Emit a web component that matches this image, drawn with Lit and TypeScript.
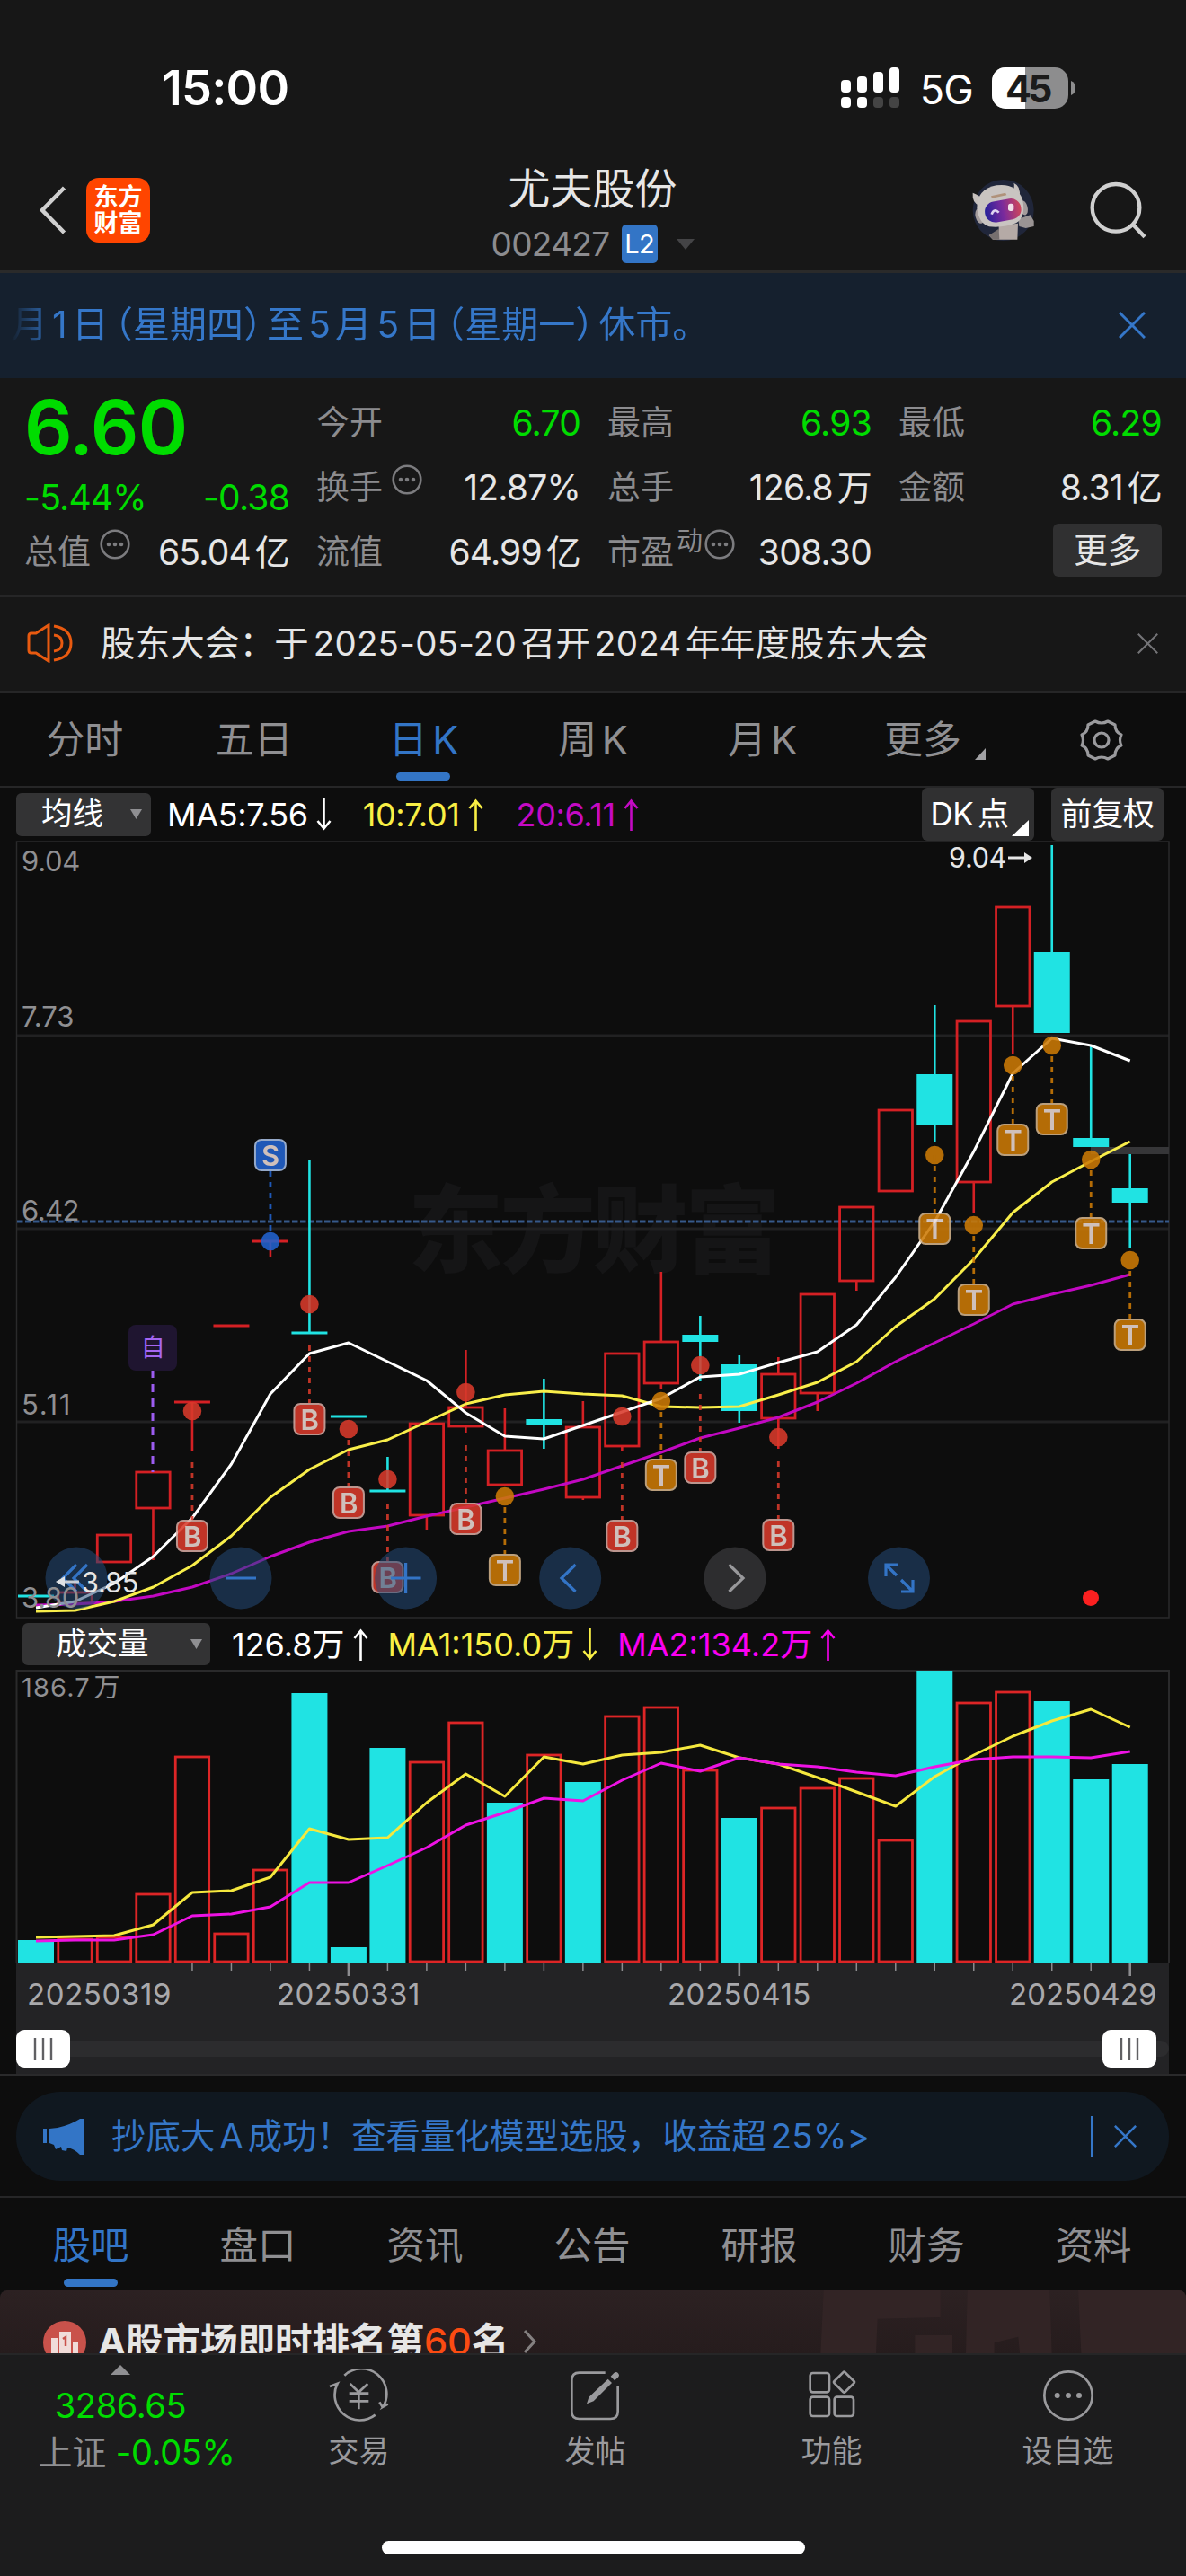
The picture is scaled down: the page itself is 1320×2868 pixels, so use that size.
import { LitElement, html, svg, css, nothing } from 'lit';
import { customElement } from 'lit/decorators.js';
import { classMap } from 'lit/directives/class-map.js';

type Candle = { up: boolean; top: number; bottom: number; high?: number; low?: number };
type Marker = { i: number; kind: 'B' | 'S' | 'T'; dot: number; badge: number };

const FIRST_X = 40;
const STEP = 43.49;
const BODY = 40;

const xAt = (i: number) => FIRST_X + STEP * i;

const c = (up: boolean, top: number, bottom: number, high?: number, low?: number): Candle => ({ up, top, bottom, high, low });

const candles: Candle[] = [
  c(false, 1777, 1777),
  c(true, 1773, 1785, 1762),
  c(true, 1709, 1739),
  c(true, 1639, 1679, undefined, 1737),
  c(true, 1561, 1561, undefined, 1615),
  c(true, 1476, 1476),
  c(true, 1382, 1382, undefined, 1399),
  c(false, 1484, 1484, 1292),
  c(false, 1577, 1577),
  c(false, 1660, 1660, 1622),
  c(true, 1585, 1687, undefined, 1703),
  c(true, 1567, 1588, 1503, 1595),
  c(true, 1615, 1653, 1568),
  c(false, 1580, 1587, 1535, 1613),
  c(true, 1589, 1667, 1560, 1670),
  c(true, 1507, 1610, undefined, 1615),
  c(true, 1494, 1540, 1416, 1546),
  c(false, 1486, 1494, 1465, 1538),
  c(false, 1519, 1571, 1509, 1584),
  c(true, 1530, 1579, 1511, 1613),
  c(true, 1441, 1551, undefined, 1571),
  c(true, 1344, 1426, undefined, 1437),
  c(true, 1236, 1326),
  c(false, 1196, 1253, 1119, 1272),
  c(true, 1137, 1316, undefined, 1350),
  c(true, 1010, 1120, undefined, 1173),
  c(false, 1060, 1150, 941),
  c(false, 1267, 1277, 1164),
  c(false, 1323, 1339, 1285, 1390),
];

const ma5 = [1790, 1783, 1763, 1733, 1690, 1630, 1552, 1507, 1495, 1516, 1537, 1573, 1599, 1602, 1587, 1572, 1557, 1533, 1530, 1517, 1505, 1475, 1422, 1360, 1282, 1195, 1156, 1164, 1181];
const ma10 = [1794, 1793, 1783, 1767, 1743, 1710, 1667, 1636, 1614, 1603, 1583, 1563, 1553, 1549, 1552, 1554, 1566, 1567, 1566, 1553, 1539, 1516, 1477, 1446, 1402, 1350, 1316, 1293, 1271];
const ma20 = [1787, 1786, 1783, 1777, 1767, 1752, 1733, 1717, 1705, 1699, 1688, 1678, 1668, 1658, 1647, 1632, 1617, 1601, 1590, 1578, 1561, 1540, 1516, 1495, 1474, 1452, 1441, 1431, 1419];

const markers: Marker[] = [
  { i: 4, kind: 'B', dot: 1571, badge: 1710 },
  { i: 6, kind: 'S', dot: 1382, badge: 1286 },
  { i: 7, kind: 'B', dot: 1452, badge: 1580 },
  { i: 8, kind: 'B', dot: 1591, badge: 1673 },
  { i: 9, kind: 'B', dot: 1647, badge: 1756 },
  { i: 11, kind: 'B', dot: 1550, badge: 1691 },
  { i: 12, kind: 'T', dot: 1666, badge: 1748 },
  { i: 15, kind: 'B', dot: 1577, badge: 1710 },
  { i: 16, kind: 'T', dot: 1560, badge: 1642 },
  { i: 17, kind: 'B', dot: 1520, badge: 1634 },
  { i: 19, kind: 'B', dot: 1600, badge: 1709 },
  { i: 23, kind: 'T', dot: 1286, badge: 1368 },
  { i: 24, kind: 'T', dot: 1364, badge: 1447 },
  { i: 25, kind: 'T', dot: 1186, badge: 1269 },
  { i: 26, kind: 'T', dot: 1164, badge: 1246 },
  { i: 27, kind: 'T', dot: 1291, badge: 1373 },
  { i: 28, kind: 'T', dot: 1403, badge: 1486 },
];

const volumeTops = [2160, 2159, 2157, 2109, 1956, 2153, 2082, 1885, 2168, 1946, 1962, 1918, 2007, 1954, 1984, 1911, 1901, 1971, 2024, 2013, 1991, 1980, 2049, 1860, 1896, 1884, 1894, 1981, 1964];
const volumeDown = [0, 7, 8, 9, 12, 14, 18, 23, 26, 27, 28];
const volumeMa1 = [2157, 2156, 2155, 2143, 2107, 2105, 2090, 2036, 2048, 2046, 2007, 1975, 2000, 1956, 1964, 1954, 1951, 1943, 1957, 1964, 1979, 1995, 2011, 1978, 1954, 1933, 1916, 1903, 1923];
const volumeMa2 = [2161, 2160, 2160, 2154, 2133, 2131, 2123, 2096, 2096, 2077, 2057, 2032, 2018, 2002, 2005, 1982, 1963, 1972, 1957, 1964, 1967, 1973, 1977, 1967, 1959, 1956, 1956, 1957, 1950];

const points = (ys: number[]) => ys.map((y, i) => `${xAt(i).toFixed(1)},${y}`).join(' ');

const arrow = (up: boolean) => html`
  <svg class="arrow" width="17" height="36" viewBox="0 0 17 36" fill="none" stroke="currentColor" stroke-width="2.6">
    ${up ? svg`<path d="M8.5 36V2M1.5 11L8.5 2.500L15.500 11" />` : svg`<path d="M8.5 0V34M1.5 25L8.5 33.5L15.500 25" />`}
  </svg>`;

const cross = (size: number, width: number) => html`
  <svg width=${size} height=${size} viewBox="0 0 30 30" fill="none" stroke="currentColor" stroke-width=${width}>
    <path d="M1 1L29 29M29 1L1 29" />
  </svg>`;

const info = html`
  <svg class="info" width="34" height="34" viewBox="0 0 34 34" fill="currentColor">
    <circle cx="17" cy="17" r="15.300" fill="none" stroke="currentColor" stroke-width="2.600" />
    <circle cx="10" cy="17" r="2.300" /><circle cx="17" cy="17" r="2.300" /><circle cx="24" cy="17" r="2.300" />
  </svg>`;

@customElement('price-chart')
class PriceChart extends LitElement {
  static styles = css`
    :host {
      display: block;
      height: 866px;
    }

    svg {
      display: block;
      font-family: Inter, "Noto Sans CJK SC", sans-serif;
    }

    .frame {
      fill: none;
      stroke: #2a2a2b;
      stroke-width: 1.5;
    }

    .grid {
      stroke: #212122;
      stroke-width: 3;
    }

    .axis {
      fill: #8f8f92;
      font-size: 31px;
    }

    .extreme {
      fill: #e6e6e6;
      font-size: 30.500px;
    }

    .watermark {
      fill: #151516;
      font-size: 106px;
      font-weight: 900;
    }

    .line {
      fill: none;
      stroke-width: 3;
      stroke-linejoin: round;
    }

    .letter {
      font-size: 31px;
      font-weight: 600;
      fill: #ead9d3;
      text-anchor: middle;
    }
  `;

  candle(d: Candle, i: number) {
    const x = xAt(i);
    const color = d.up ? '#d42024' : '#20e3e3';
    const flat = d.bottom - d.top < 2;
    return svg`
      ${d.high ? svg`<path d="M${x} ${d.high}V${d.top}" stroke=${color} stroke-width="2.600" />` : nothing}
      ${d.low ? svg`<path d="M${x} ${d.bottom}V${d.low}" stroke=${color} stroke-width="2.600" />` : nothing}
      ${flat
        ? svg`<path d="M${x - BODY / 2} ${d.top}h${BODY}" stroke=${color} stroke-width="3" />`
        : d.up
          ? svg`<rect x=${x - BODY / 2 + 1.3} y=${d.top} width=${BODY - 2.6} height=${d.bottom - d.top} fill="none" stroke=${color} stroke-width="2.800" />`
          : svg`<rect x=${x - BODY / 2} y=${d.top} width=${BODY} height=${d.bottom - d.top} fill=${color} />`}
    `;
  }

  marker(m: Marker) {
    const x = xAt(m.i);
    const color = { B: '#d93a2b', S: '#2263cf', T: '#cc7a06' }[m.kind];
    const edge = { B: '#d5a9a2', S: '#a8bfe4', T: '#d3b48c' }[m.kind];
    // buy labels hang below the candle, so their leader starts under the wick
    const from = m.kind === 'B' ? m.badge - 82 : m.dot;
    const start = m.kind === 'S' ? m.badge + 18 : Math.max(from, m.dot);
    const end = m.kind === 'S' ? m.dot : m.badge - 18;
    return svg`
      <g opacity="0.880">
        <circle cx=${x} cy=${m.dot} r="10.300" fill=${color} />
        <path d="M${x} ${start}V${end}" stroke=${color} stroke-width="2.800" stroke-dasharray="6 6" />
        <rect x=${x - 17} y=${m.badge - 17} width="34" height="34" rx="7" fill=${color} stroke=${edge} stroke-width="2" />
        <text class="letter" x=${x} y=${m.badge + 11.5}>${m.kind}</text>
      </g>`;
  }

  render() {
    return html`
      <svg width="1320" height="866" viewBox="0 936 1320 866">
        <text class="watermark" x="454" y="1408" textLength="414">东方财富</text>
        <path class="grid" d="M19 1153H1301M19 1368H1301M19 1583H1301" />
        <rect class="frame" x="18.500" y="937" width="1282.500" height="864" />
        <path d="M1214 1281H1301" stroke="#363638" stroke-width="8" />
        <path d="M19 1360H1301" stroke="#36598a" stroke-width="3" stroke-dasharray="6.500 2.500" />

        <text class="axis" x="24" y="970" textLength="65">9.04</text>
        <text class="axis" x="24" y="1143" textLength="58">7.73</text>
        <text class="axis" x="24" y="1359" textLength="64">6.42</text>
        <text class="axis" x="24" y="1575" textLength="54">5.11</text>

        ${candles.map((d, i) => this.candle(d, i))}

        <text class="extreme" x="1056" y="966" textLength="64">9.04</text>
        <path d="M1122 955H1143" stroke="#e6e6e6" stroke-width="3" />
        <path d="M1140 949L1149 955L1140 961Z" fill="#e6e6e6" />

        <polyline class="line" stroke="#c208c2" points=${points(ma20)} />
        <polyline class="line" stroke="#f8ee4a" points=${points(ma10)} />
        <polyline class="line" stroke="#ffffff" points=${points(ma5)} />
        ${markers.map((m) => this.marker(m))}

        <path d="M170 1525V1639" stroke="#9c5cf0" stroke-width="3" stroke-dasharray="9 7" />
        <rect x="143" y="1475" width="54" height="51" rx="8" fill="#1f1530" />
        <text x="170" y="1510" font-size="27" fill="#a566f2" text-anchor="middle">自</text>

        ${[85, 268, 451.6, 634.7, 1000.5].map((x) => svg`<circle cx=${x} cy="1757" r="34.500" fill="#244a78" opacity="0.550" />`)}
        <circle cx="818" cy="1757" r="34.500" fill="#2d2d2f" />
        <g fill="none" stroke="#3374c6" stroke-width="3.200">
          <path d="M85 1742L70 1757L85 1772M97 1742L82 1757L97 1772" />
          <path d="M251.500 1757H285" />
          <path d="M435 1757H468.500M451.600 1740V1774" />
          <path d="M640.500 1742L625 1757L640.500 1772" />
          <path d="M986 1755V1742H999M986 1742L998 1754M1003 1772H1016V1759M1016 1772L1003 1759" />
          <path stroke="#98989b" d="M811.500 1742L827 1757L811.500 1772" />
        </g>

        <text class="axis" x="24" y="1790" textLength="64">3.80</text>
        <text class="extreme" x="91" y="1773" textLength="63">3.85</text>
        <path d="M70 1761H88" stroke="#c9ced6" stroke-width="3" />
        <path d="M72 1755L62 1761L72 1767Z" fill="#dfe2e6" />
        <circle cx="1214" cy="1779" r="9" fill="#fb2020" />
      </svg>
    `;
  }
}

@customElement('volume-chart')
class VolumeChart extends LitElement {
  static styles = css`
    :host {
      display: block;
      height: 452px;
    }

    svg {
      display: block;
      font-family: Inter, "Noto Sans CJK SC", sans-serif;
    }

    .frame {
      fill: none;
      stroke: #2a2a2b;
      stroke-width: 2;
    }

    .max {
      fill: #8f8f92;
      font-size: 29px;
    }

    .date {
      fill: #a9a9ac;
      font-size: 33px;
    }

    .line {
      fill: none;
      stroke-width: 3;
      stroke-linejoin: round;
    }
  `;

  bar(top: number, i: number) {
    const x = xAt(i);
    return volumeDown.includes(i)
      ? svg`<rect x=${x - BODY / 2} y=${top} width=${BODY} height=${2185 - top} fill="#20e3e3" />`
      : svg`<rect x=${x - BODY / 2 + 1.3} y=${top} width=${BODY - 2.6} height=${2184 - top} fill="none" stroke="#dd2526" stroke-width="2.800" />`;
  }

  tick(i: number) {
    const major = i % 10 === 8;
    return svg`<path d="M${xAt(i)} 2185v${major ? 15 : 9}" stroke="#8c8c8f" stroke-width=${major ? 2.6 : 1.5} />`;
  }

  handle(x: number) {
    return svg`
      <rect x=${x} y="2260" width="60" height="42" rx="9" fill="#fff" />
      <path d="M${x + 21} 2269v24M${x + 30} 2269v24M${x + 39} 2269v24" stroke="#606063" stroke-width="2.400" />`;
  }

  render() {
    return html`
      <svg width="1320" height="452" viewBox="0 1859 1320 452">
        <path class="frame" d="M18.500 2185V1860H1301V2185" />
        <rect x="18" y="2185" width="1283" height="125" fill="#232325" />
        <text class="max" x="24" y="1889" textLength="109">186.7万</text>
        ${volumeTops.map((top, i) => this.bar(top, i))}
        <polyline class="line" stroke="#f5e83e" points=${points(volumeMa1)} />
        <polyline class="line" stroke="#ee12e4" points=${points(volumeMa2)} />
        ${volumeTops.map((_, i) => (i > 3 ? this.tick(i) : nothing))}
        <text class="date" x="30" y="2232" textLength="160">20250319</text>
        <text class="date" x="308" y="2232" textLength="159">20250331</text>
        <text class="date" x="743" y="2232" textLength="159">20250415</text>
        <text class="date" x="1123" y="2232" textLength="164">20250429</text>
        <rect x="18" y="2272" width="1283" height="18" rx="9" fill="#2c2c2e" />
        ${this.handle(18)} ${this.handle(1227)}
        <path d="M0 2310H1320" stroke="#2a2a2b" stroke-width="2" />
      </svg>
    `;
  }
}

@customElement('app-root')
class AppRoot extends LitElement {
  static styles = css`
    :host {
      display: block;
      width: 1320px;
      height: 2868px;
      overflow: hidden;
      background: #0d0d0d;
      color: #e6e6e6;
      font-family: Inter, "Noto Sans CJK SC", sans-serif;
      font-size: 38px;
      line-height: 1;
      letter-spacing: -0.01em;
      text-autospace: normal;
      white-space: nowrap;
    }

    * {
      box-sizing: border-box;
    }

    svg {
      display: block;
      flex: none;
    }

    .status {
      display: flex;
      align-items: center;
      height: 166px;
      padding: 30px 122px 0 180px;
      background: #171717;
      color: #fff;
    }

    .time {
      flex: 1;
      font-size: 54px;
      font-weight: 600;
      letter-spacing: -0.015em;
    }

    .network {
      margin: 3px 21px 0 22px;
      font-size: 45px;
      letter-spacing: -0.02em;
    }

    .battery text {
      font: 700 43px Inter, sans-serif;
      fill: #1b1b1b;
    }

    .header {
      display: grid;
      grid-template-columns: 1fr auto 1fr;
      align-items: center;
      height: 138px;
      padding: 0 44px 0 43px;
      background: #171717;
      border-bottom: 3px solid #2a2a2a;
    }

    .header-left {
      display: flex;
      align-items: center;
      gap: 22px;
    }

    .logo {
      display: grid;
      align-content: center;
      justify-content: center;
      width: 71px;
      height: 72px;
      border-radius: 14px;
      background: #ff4500;
      color: #fff;
      font-size: 27px;
      font-weight: 700;
      line-height: 29px;
      letter-spacing: 0;
    }

    .title {
      display: flex;
      flex-direction: column;
      align-items: center;
      gap: 17px;
      padding-top: 12px;
    }

    .name {
      font-size: 47px;
      letter-spacing: 0;
    }

    .code {
      display: flex;
      align-items: center;
      color: #8c8c8f;
      font-size: 37px;
      letter-spacing: -0.018em;
    }

    .level {
      width: 40px;
      height: 43px;
      margin: 0 21px 0 13px;
      border-radius: 5px;
      background: #3375c6;
      color: #fff;
      font-size: 29px;
      line-height: 43px;
      text-align: center;
    }

    .header-right {
      display: flex;
      align-items: center;
      justify-content: flex-end;
      gap: 58px;
    }

    .notice {
      display: flex;
      align-items: center;
      justify-content: space-between;
      height: 117px;
      padding: 0 45px 2px 12px;
      background: #15202e;
      color: #3577c9;
      font-size: 41px;
      letter-spacing: 0;
    }

    .fade {
      mask-image: linear-gradient(90deg, transparent 0, #000 50px);
    }

    .open {
      margin-left: -14px;
    }

    .close {
      margin-right: -15px;
    }

    .quote {
      display: grid;
      grid-template: repeat(3, 72px) / 295px 294px 294px 293px;
      column-gap: 30px;
      height: 244px;
      padding: 13px 27px 0 27px;
      background: #171717;
      border-bottom: 2px solid #262627;
    }

    .last {
      grid-row: span 2;
      display: flex;
      flex-direction: column;
      color: #00dc00;
    }

    .price {
      height: 83px;
      font-size: 84px;
      font-weight: 600;
      line-height: 83px;
      letter-spacing: -0.01em;
    }

    .change {
      display: flex;
      justify-content: space-between;
      padding-top: 17px;
    }

    .change,
    .value {
      font-size: 39px;
      letter-spacing: -0.02em;
    }

    .cell {
      display: flex;
      align-items: center;
    }

    .cell:last-child {
      justify-content: flex-end;
    }

    .label {
      color: #8c8c8f;
      font-size: 37px;
      letter-spacing: 0;
    }

    .sup {
      margin: -24px 0 0 3px;
      color: #8c8c8f;
      font-size: 29px;
    }

    .info {
      margin: -16px 0 0 10px;
      color: #7c7c7f;
    }

    .sup + .info {
      margin-left: 2px;
    }

    .value {
      margin-left: auto;
    }

    .green {
      color: #00dc00;
    }

    .more {
      width: 121px;
      height: 59px;
      margin-top: -4px;
      border-radius: 6px;
      background: #303031;
      line-height: 59px;
      text-align: center;
    }

    .news {
      display: flex;
      align-items: center;
      height: 107px;
      padding: 0 31px 2px 30px;
      background: #171717;
      border-bottom: 3px solid #262627;
      font-size: 38.4px;
      letter-spacing: 0.007em;
    }

    .news-text {
      flex: 1;
      margin-left: 31px;
    }

    .dim {
      color: #747477;
    }

    .tabs {
      display: grid;
      grid-template-columns: repeat(7, 1fr);
      height: 105px;
      border-bottom: 2px solid #262627;
      color: #8f8f92;
      font-size: 43px;
      letter-spacing: 0;
    }

    .tab {
      display: flex;
      flex-direction: column;
      align-items: center;
      justify-content: center;
      position: relative;
    }

    .active {
      color: #3375c6;
    }

    .active::after {
      content: "";
      position: absolute;
      bottom: 6px;
      width: 60px;
      height: 9px;
      border-radius: 5px;
      background: #3375c6;
    }

    .with-corner {
      flex-direction: row;
      padding-left: 7px;
    }

    .corner {
      margin: 31px 0 0 15px;
    }

    .indicators {
      display: flex;
      align-items: center;
      height: 59px;
      padding: 0 25px 0 18px;
      font-size: 36px;
      letter-spacing: -0.01em;
      text-autospace: no-autospace;
    }

    .select {
      display: flex;
      align-items: center;
      justify-content: space-between;
      width: 150px;
      height: 48px;
      padding: 0 10px 0 28px;
      border-radius: 6px;
      background: #333334;
      color: #fff;
      font-size: 34.5px;
      letter-spacing: 0;
    }

    .reading {
      display: flex;
      align-items: center;
    }

    .arrow {
      margin-left: 9px;
    }

    .white {
      color: #fff;
    }

    .yellow {
      color: #f9ef45;
    }

    .purple {
      color: #c40ac4;
    }

    .magenta {
      color: #fa00f0;
    }

    .chip {
      display: flex;
      justify-content: center;
      align-items: center;
      width: 125px;
      height: 59px;
      border-radius: 6px;
      background: #303031;
      color: #fff;
      font-size: 35px;
      letter-spacing: -0.01em;
    }

    .chip + .chip {
      margin-left: 19px;
    }

    .dk {
      margin-left: auto;
      gap: 3px;
      text-autospace: normal;
    }

    .dk svg {
      align-self: flex-end;
      margin: 0 -3px 5px 0;
    }

    .volume-head {
      height: 57px;
      padding-left: 25px;
      letter-spacing: 0;
    }

    .volume-head .select {
      width: 209px;
      height: 47px;
      padding: 0 9px 0 37px;
    }

    .promo-wrap {
      height: 136px;
      padding: 18px 19px 0 18px;
      border-bottom: 2px solid #262627;
    }

    .promo {
      display: flex;
      align-items: center;
      height: 99px;
      padding: 0 36px 0 30px;
      border-radius: 49px;
      background: #101820;
      color: #3577c9;
      font-size: 38.4px;
      letter-spacing: 0.1px;
    }

    .promo-text {
      flex: 1;
      margin-left: 31px;
    }

    .bar {
      width: 2px;
      height: 45px;
      margin-right: 24px;
      background: #3577c9;
    }

    .sections {
      height: 103px;
      padding: 0 10px 0 8px;
      border: 0;
      font-size: 42.500px;
    }

    .sections .active::after {
      bottom: 4px;
    }

    .sections .tab {
      padding-top: 4px;
    }

    .rank {
      display: flex;
      align-items: flex-start;
      position: relative;
      height: 70px;
      overflow: hidden;
      padding: 34px 0 0 48px;
      background: linear-gradient(#2c2122, #261c1d);
      border-radius: 8px 8px 0 0;
      font-size: 41.5px;
      font-weight: 700;
      letter-spacing: 0;
      text-autospace: no-autospace;
    }

    .rank-text {
      margin: 3px 17px 0 13px;
    }

    .hot {
      color: #fb4b12;
      font-weight: 500;
    }

    .more-arrow {
      margin-top: 10px;
    }

    .rank-art {
      position: absolute;
      top: 0;
      right: 0;
    }

    .bottom {
      display: grid;
      grid-template-columns: 268px repeat(4, 263px);
      position: relative;
      height: 248px;
      background: #1c1c1d;
      border-top: 2px solid #262627;
      color: #9a9a9d;
    }

    .index {
      display: flex;
      flex-direction: column;
      align-items: center;
      padding-top: 11px;
      color: #8f8f92;
    }

    .index .green {
      letter-spacing: -0.01em;
    }

    .points {
      margin-top: 15px;
    }

    .shanghai {
      display: flex;
      gap: 11px;
      margin: 14px 0 0 36px;
    }

    .action {
      display: flex;
      flex-direction: column;
      align-items: center;
      padding-top: 15px;
      font-size: 34px;
      letter-spacing: 0;
    }

    .action svg {
      height: 60px;
      margin-bottom: 15px;
    }

    .home {
      position: absolute;
      left: 425px;
      bottom: 24px;
      width: 471px;
      height: 15px;
      border-radius: 8px;
      background: #fff;
    }
  `;

  statusBar() {
    return html`
      <div class="status">
        <div class="time">15:00</div>
        <svg width="66" height="46" viewBox="0 0 66 46" fill="#fff">
          <rect x="0" y="14" width="11" height="14" rx="4" />
          <rect x="18" y="10" width="11" height="18" rx="4" />
          <rect x="36" y="5" width="11" height="23" rx="4" />
          <rect x="54" y="0" width="11" height="28" rx="4" />
          <rect x="0" y="33" width="11" height="12" rx="4" />
          <rect x="18" y="33" width="11" height="12" rx="4" />
          <rect x="36" y="33" width="11" height="12" rx="4" fill="#444" />
          <rect x="54" y="33" width="11" height="12" rx="4" fill="#444" />
        </svg>
        <div class="network">5G</div>
        <svg class="battery" width="94" height="46" viewBox="0 0 94 46">
          <rect width="85" height="46" rx="15" fill="#8d8d8e" />
          <path d="M37 0H15A15 15 0 0 0 0 15V31A15 15 0 0 0 15 46H37Z" fill="#fff" />
          <path d="M88 15Q93 17 93 23T88 31Z" fill="#8d8d8e" />
          <text x="15" y="38.500" textLength="52">45</text>
        </svg>
      </div>
    `;
  }

  header() {
    return html`
      <div class="header">
        <div class="header-left">
          <svg width="31" height="54" viewBox="0 0 31 54" fill="none" stroke="#cfcfcf" stroke-width="4.500">
            <path d="M28.500 2L4 27L28.500 52" />
          </svg>
          <div class="logo"><span>东方</span><span>财富</span></div>
        </div>
        <div class="title">
          <div class="name">尤夫股份</div>
          <div class="code">
            002427<span class="level">L2</span>
            <svg width="20" height="12" viewBox="0 0 20 12" fill="#444446"><path d="M0 0H20L10 12Z" /></svg>
          </div>
        </div>
        <div class="header-right">
          <svg width="74" height="72" viewBox="55 30 222 216">
            <defs>
              <linearGradient id="visor" x1="0" x2="1">
                <stop offset="0" stop-color="#25209a" />
                <stop offset="0.500" stop-color="#7a2a9c" />
                <stop offset="1" stop-color="#d0475a" />
              </linearGradient>
            </defs>
            <circle cx="165" cy="138" r="102" fill="#20263a" />
            <path d="M150 190L214 182L212 236H130L117 222L150 205Z" fill="#b5aaa6" />
            <path d="M117 222L150 200L152 236H130Z" fill="#77706f" />
            <path d="M215 168L255 154L267 174V192L240 198L218 192Z" fill="#9a9494" />
            <path d="M84 122Q60 112 63 80Q75 84 86 92ZM192 74Q206 64 200 47Q224 58 219 92Z" fill="#c6c0bd" />
            <ellipse cx="86" cy="158" rx="14" ry="25" fill="#a49c9c" transform="rotate(-14 86 158)" />
            <ellipse cx="233" cy="130" rx="13" ry="25" fill="#a49c9c" transform="rotate(-14 233 130)" />
            <path d="M77 132Q76 68 142 55Q207 46 229 101Q242 160 208 181Q165 198 118 193Q84 183 77 132Z" fill="#c9c4c1" />
            <path d="M124 91L172 80L176 88L127 98Z" fill="#b0927a" />
            <rect x="103" y="104" width="122" height="70" rx="34" fill="url(#visor)" transform="rotate(-10 164 139)" />
            <path d="M126 152Q134 130 150 146" fill="none" stroke="#ded4f0" stroke-width="8" />
            <rect x="181" y="116" width="19" height="25" rx="8" fill="#f0dfe8" />
          </svg>
          <svg width="64" height="66" viewBox="452 34 192 198" fill="none" stroke="#d0d0d0" stroke-width="13">
            <circle cx="542" cy="125" r="79" /><path d="M598 180L638 222" />
          </svg>
        </div>
      </div>
    `;
  }

  cell(label: string, value: string, extra: unknown = nothing, green = false) {
    return html`
      <div class="cell">
        <span class="label">${label}</span>${extra}
        <span class=${classMap({ value: true, green })}>${value}</span>
      </div>
    `;
  }

  quote() {
    return html`
      <div class="quote">
        <div class="last">
          <div class="price">6.60</div>
          <div class="change"><span>-5.44%</span><span>-0.38</span></div>
        </div>
        ${this.cell('今开', '6.70', nothing, true)}
        ${this.cell('最高', '6.93', nothing, true)}
        ${this.cell('最低', '6.29', nothing, true)}
        ${this.cell('换手', '12.87%', info)}
        ${this.cell('总手', '126.8万')}
        ${this.cell('金额', '8.31亿')}
        ${this.cell('总值', '65.04亿', info)}
        ${this.cell('流值', '64.99亿')}
        ${this.cell('市盈', '308.30', html`<span class="sup">动</span>${info}`)}
        <div class="cell"><div class="more">更多</div></div>
      </div>
      <div class="news">
        <svg width="51" height="44" viewBox="0 0 51 44" fill="none" stroke="#e85a10" stroke-width="3">
          <path d="M24 2V42L10 33H5Q2 33 2 30V14Q2 11 5 11H10Z" />
          <path d="M30 13Q39 14 39 22T30 31M30 3Q49 6 49 22T30 41" />
        </svg>
        <div class="news-text">股东大会：于2025-05-20召开2024年年度股东大会</div>
        <span class="dim">${cross(23, 2.6)}</span>
      </div>
    `;
  }

  periodTabs() {
    return html`
      <div class="tabs">
        ${['分时', '五日', '日K', '周K', '月K'].map(
          (name) => html`<div class=${classMap({ tab: true, active: name === '日K' })}>${name}</div>`
        )}
        <div class="tab with-corner">
          更多
          <svg class="corner" width="12" height="13" viewBox="0 0 12 13" fill="#a0a0a3"><path d="M12 0V13H0Z" /></svg>
        </div>
        <div class="tab">
          <svg width="50" height="48" viewBox="0 0 50 48" fill="none" stroke="#9a9a9d" stroke-width="3.200" stroke-linejoin="round">
            <path d="M18 3Q25 7 32 3L40 7Q40 15 47 18Q44 24 47 30Q40 33 40 41L32 45Q25 41 18 45L10 41Q10 33 3 30Q6 24 3 18Q10 15 10 7Z" />
            <circle cx="25" cy="24" r="8" />
          </svg>
        </div>
      </div>
    `;
  }

  caret() {
    return html`<svg width="13" height="11" viewBox="0 0 13 11" fill="#8f8f92"><path d="M0 0H13L6.500 11Z" /></svg>`;
  }

  reading(text: string, up: boolean, color: string, gap: number) {
    return html`<div class="reading ${color}" style="margin-left: ${gap}px">${text}${arrow(up)}</div>`;
  }

  icons = {
    trade: html`
      <svg width="70" height="60" viewBox="50 110 210 180" fill="none" stroke="currentColor" stroke-width="8">
        <path d="M105 133A84 84 0 0 1 234 238L250 229M208 265A84 84 0 0 1 82 160L56 170M233 240L222 222" />
        <path d="M124 161L153 189L183 161M121 193H186M121 219H186M153 189V246" />
      </svg>`,
    post: html`
      <svg width="60" height="60" viewBox="855 110 180 180" fill="none" stroke="currentColor" stroke-width="8">
        <path d="M977 124H890Q865 124 865 149V253Q865 278 890 278H994Q1019 278 1019 253V168" />
        <path d="M915 228L922 206L986 145L999 158L938 219ZM995 136L1006 125Q1014 119 1020 126T1020 139L1008 150Z" fill="currentColor" stroke="none" />
      </svg>`,
    features: html`
      <svg width="58" height="60" viewBox="53 325 174 180" fill="none" stroke="currentColor" stroke-width="8" stroke-linejoin="round">
        <rect x="67" y="340" width="64" height="64" rx="9" />
        <rect x="67" y="420" width="64" height="64" rx="9" />
        <rect x="148" y="420" width="64" height="64" rx="9" />
        <rect x="155" y="345" width="51" height="51" rx="5" transform="rotate(45 180.500 370.500)" />
      </svg>`,
    custom: html`
      <svg width="60" height="60" viewBox="837 321 180 180" fill="currentColor">
        <circle cx="927" cy="411" r="80" fill="none" stroke="currentColor" stroke-width="8" />
        <circle cx="890" cy="411" r="9" /><circle cx="927" cy="411" r="9" /><circle cx="963" cy="411" r="9" />
      </svg>`,
  };

  action(icon: unknown, label: string) {
    return html`<div class="action">${icon}<span>${label}</span></div>`;
  }

  footer() {
    return html`
      <div class="promo-wrap">
        <div class="promo">
          <svg width="45" height="40" viewBox="0 0 45 40" fill="#3375c6">
            <path d="M0 11H4V27H0ZM7 11L16 10Q30 7 41 0H45V40H41Q34 33 27 32L26 36L21 35L20 31L14 34L12 29L7 27Z" />
          </svg>
          <div class="promo-text">抄底大A成功！查看量化模型选股，收益超25%&gt;</div>
          <div class="bar"></div>
          ${cross(25, 3)}
        </div>
      </div>
      <div class="tabs sections">
        ${['股吧', '盘口', '资讯', '公告', '研报', '财务', '资料'].map(
          (name, i) => html`<div class=${classMap({ tab: true, active: i === 0 })}>${name}</div>`
        )}
      </div>
      <div class="rank">
        <svg class="rank-art" width="440" height="70" viewBox="0 60 1320 210" fill="#322425">
          <path d="M110 60H500V150L290 155L285 270H100ZM415 210H540V270H415ZM590 60H865L872 270H765L760 215L680 235V270H585ZM960 60H1320V270H970Z" />
        </svg>
        <svg width="48" height="48" viewBox="0 0 48 48">
          <circle cx="24" cy="24" r="24" fill="#c9524b" />
          <path d="M9 19H16V48H9ZM18 12H31V48H18ZM33 23H39V48H33Z" fill="#f0dcd9" />
          <path d="M22 20L25 18V28" fill="none" stroke="#c9524b" stroke-width="2.500" />
        </svg>
        <div class="rank-text">A股市场即时排名第<span class="hot">60</span>名</div>
        <svg class="more-arrow" width="14" height="26" viewBox="0 0 14 26" fill="none" stroke="#848080" stroke-width="3">
          <path d="M1 1L12 13L1 25" />
        </svg>
      </div>
      <div class="bottom">
        <div class="index">
          <svg width="22" height="11" viewBox="0 0 22 11" fill="#8f8f92"><path d="M11 0L22 11H0Z" /></svg>
          <div class="points green">3286.65</div>
          <div class="shanghai"><span>上证</span><span class="green">-0.05%</span></div>
        </div>
        ${this.action(this.icons.trade, '交易')}
        ${this.action(this.icons.post, '发帖')}
        ${this.action(this.icons.features, '功能')}
        ${this.action(this.icons.custom, '设自选')}
        <div class="home"></div>
      </div>
    `;
  }

  render() {
    return html`
      ${this.statusBar()}
      ${this.header()}
      <div class="notice">
        <span class="fade">月1日<span class="open">（</span>星期四<span class="close">）</span>至5月5日<span class="open">（</span>星期一<span class="close">）</span>休市。</span>
        ${cross(30, 3)}
      </div>
      ${this.quote()}
      ${this.periodTabs()}
      <div class="indicators">
        <div class="select">均线${this.caret()}</div>
        ${this.reading('MA5:7.56', false, 'white', 18)}
        ${this.reading('10:7.01', true, 'yellow', 35)}
        ${this.reading('20:6.11', true, 'purple', 37)}
        <div class="chip dk">
          DK点
          <svg width="19" height="18" viewBox="0 0 19 18" fill="#fff"><path d="M19 0V18H0Z" /></svg>
        </div>
        <div class="chip">前复权</div>
      </div>
      <price-chart></price-chart>
      <div class="indicators volume-head">
        <div class="select">成交量${this.caret()}</div>
        ${this.reading('126.8万', true, 'white', 24)}
        ${this.reading('MA1:150.0万', false, 'yellow', 22)}
        ${this.reading('MA2:134.2万', true, 'magenta', 22)}
      </div>
      <volume-chart></volume-chart>
      ${this.footer()}
    `;
  }
}
